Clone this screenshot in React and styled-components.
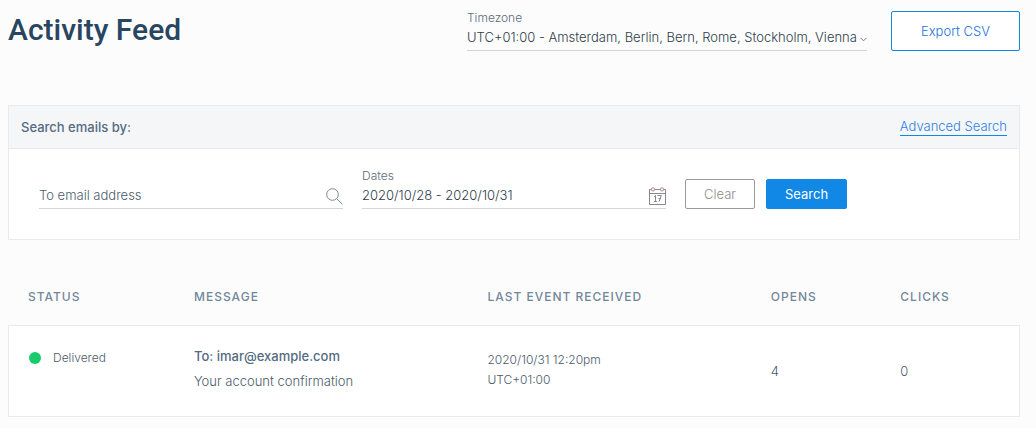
import React, { useState } from "react";
//styles
import styled, { createGlobalStyle } from "styled-components";

const events = [
    {
        id: 1,
        status: "Delivered",
        to: "imar@example.com",
        subject: "Your account confirmation",
        date: "2020/10/31 12:20pm",
        zone: "UTC+01:00",
        opens: 4,
        clicks: 0,
    },
];

const ChevronIcon = () => (
    <svg width='7' height='5' viewBox='0 0 7 5' aria-hidden='true'>
        <path
            d='M0.5 0.8 L3.5 3.8 L6.5 0.8'
            fill='none'
            stroke='#6b7a89'
            strokeWidth='1'
        />
    </svg>
);

const SearchIcon = () => (
    <svg width='17' height='17' viewBox='0 0 17 17' aria-hidden='true'>
        <g fill='none' stroke='#7f868e' strokeWidth='1'>
            <circle cx='6.5' cy='6.5' r='5.8' />
            <path d='M10.7 10.7 L16.4 16.2' />
        </g>
    </svg>
);

const CalendarIcon = () => (
    <svg width='17' height='18' viewBox='0 0 17 18' aria-hidden='true'>
        <g fill='none' stroke='#8a8790' strokeWidth='1'>
            <path d='M2.5 2.5 H0.5 V17.5 H16.5 V2.5 H14.5' />
            <path d='M5.5 2.5 H11.5' />
            <path d='M0.5 6.5 H16.5' />
            <circle cx='4' cy='2.4' r='1.6' stroke='#a98a7c' />
            <circle cx='13' cy='2.4' r='1.6' stroke='#a98a7c' />
            <path d='M5 9.8 L6.5 8.5 V14.5 M5 14.5 H8' />
            <path d='M8.5 8.5 H12.3 L10 14.8 M9.5 11.5 H12' />
        </g>
    </svg>
);

function App() {
    const [email, setEmail] = useState("");
    const [dates, setDates] = useState("2020/10/28 - 2020/10/31");

    return (
        <>
            <GlobalStyle />
            <Page>
                <Header>
                    <Title>Activity Feed</Title>
                    <Timezone>
                        <Label htmlFor='timezone'>Timezone</Label>
                        <Control>
                            <Select id='timezone'>
                                <option>
                                    UTC+01:00 - Amsterdam, Berlin, Bern, Rome,
                                    Stockholm, Vienna
                                </option>
                            </Select>
                            <ControlIcon className='chevron'>
                                <ChevronIcon />
                            </ControlIcon>
                        </Control>
                    </Timezone>
                    <Button className='export'>Export CSV</Button>
                </Header>

                <Panel>
                    <PanelHeader>
                        <PanelTitle>Search emails by:</PanelTitle>
                        <AdvancedLink href='#advanced'>
                            Advanced Search
                        </AdvancedLink>
                    </PanelHeader>
                    <SearchForm onSubmit={(e) => e.preventDefault()}>
                        <Field>
                            <Control>
                                <Input
                                    aria-label='To email address'
                                    placeholder='To email address'
                                    value={email}
                                    onChange={(e) => setEmail(e.target.value)}
                                />
                                <ControlIcon>
                                    <SearchIcon />
                                </ControlIcon>
                            </Control>
                        </Field>
                        <Field>
                            <Label htmlFor='dates'>Dates</Label>
                            <Control>
                                <Input
                                    id='dates'
                                    value={dates}
                                    onChange={(e) => setDates(e.target.value)}
                                />
                                <ControlIcon>
                                    <CalendarIcon />
                                </ControlIcon>
                            </Control>
                        </Field>
                        <Actions>
                            <Button
                                type='button'
                                className='clear'
                                onClick={() => setEmail("")}
                            >
                                Clear
                            </Button>
                            <Button type='submit' className='search'>
                                Search
                            </Button>
                        </Actions>
                    </SearchForm>
                </Panel>

                <Table>
                    <thead>
                        <tr>
                            <HeadCell $width='16.4%'>Status</HeadCell>
                            <HeadCell $width='29%'>Message</HeadCell>
                            <HeadCell $width='28%'>
                                Last event received
                            </HeadCell>
                            <HeadCell $width='12.8%'>Opens</HeadCell>
                            <HeadCell>Clicks</HeadCell>
                        </tr>
                    </thead>
                    <tbody>
                        {events.map((event) => (
                            <tr key={event.id}>
                                <Cell>
                                    <Status>
                                        <Dot />
                                        {event.status}
                                    </Status>
                                </Cell>
                                <Cell>
                                    <Message>
                                        <Recipient>To: {event.to}</Recipient>
                                        {event.subject}
                                    </Message>
                                </Cell>
                                <Cell>
                                    <Stamp>
                                        <div>{event.date}</div>
                                        <div>{event.zone}</div>
                                    </Stamp>
                                </Cell>
                                <Cell>{event.opens}</Cell>
                                <Cell>{event.clicks}</Cell>
                            </tr>
                        ))}
                    </tbody>
                </Table>
            </Page>
        </>
    );
}

const GlobalStyle = createGlobalStyle`
    * {
        box-sizing: border-box;
    }

    body {
        margin: 0;
        background: #fcfcfc;
        color: #4c5b6b;
        font-family: Inter, Roboto, sans-serif;
        font-size: 13px;
        font-weight: 300;
    }

    button, input, select {
        font: inherit;
        color: inherit;
    }
`;

const Page = styled.main`
    padding: 11px 16px 11px 8px;
`;

const Header = styled.header`
    display: flex;
    align-items: flex-start;
    gap: 24px;
    margin-bottom: 54px;
`;

const Title = styled.h1`
    flex: 1;
    margin: 0;
    font-family: Roboto, sans-serif;
    font-size: 30px;
    line-height: 38px;
    font-weight: 500;
    color: #294661;
    white-space: nowrap;
`;

const Timezone = styled.div`
    width: 400px;
`;

const Label = styled.label`
    display: block;
    font-size: 12px;
    line-height: 14px;
    color: #5c6b7a;
`;

const Control = styled.div`
    position: relative;
`;

const Select = styled.select`
    display: block;
    width: 100%;
    height: 26px;
    padding: 0 0 1px;
    border: none;
    border-bottom: 1px solid #cbd5e0;
    border-radius: 0;
    background: transparent;
    appearance: none;
    color: #2f3c4a;
`;

const Input = styled.input`
    display: block;
    width: 100%;
    height: 26px;
    padding: 0 24px 2px 0;
    border: none;
    border-bottom: 1px solid #d3d6df;
    background: transparent;
    color: #2f3c4a;

    &::placeholder {
        color: #4c5b6b;
        opacity: 1;
    }
`;

const ControlIcon = styled.span`
    position: absolute;
    right: 0;
    bottom: 4px;
    display: flex;
    pointer-events: none;

    &.chevron {
        bottom: 9px;
    }
`;

const Button = styled.button`
    height: 30px;
    padding: 0 18px;
    border: 1px solid #1188e6;
    border-radius: 2px;
    background: #fff;
    line-height: 16px;
    white-space: nowrap;
    cursor: pointer;

    &.export {
        height: 40px;
        padding: 0 29px;
        color: #1a72e0;
    }

    &.clear {
        border-color: #999;
        color: #8a8d90;
    }

    &.search {
        background: #1188e6;
        color: #fff;
        font-weight: 400;
    }
`;

const Panel = styled.section`
    border: 1px solid #e9eaeb;
    background: #fff;
`;

const PanelHeader = styled.div`
    display: flex;
    align-items: center;
    justify-content: space-between;
    height: 43px;
    padding: 0 12px;
    border-bottom: 1px solid #e9ebed;
    background: #f4f6f8;
`;

const PanelTitle = styled.h2`
    margin: 0;
    font-size: 13px;
    line-height: 18px;
    font-weight: 500;
    color: #546b81;
`;

const AdvancedLink = styled.a`
    border-bottom: 1px solid #1188e6;
    line-height: 17px;
    color: #2f80e4;
    text-decoration: none;
`;

const SearchForm = styled.form`
    display: flex;
    align-items: flex-end;
    gap: 19px;
    padding: 20px 30px 30px;
`;

const Field = styled.div`
    flex: 0 1 304px;
`;

const Actions = styled.div`
    display: flex;
    gap: 11px;
`;

const Table = styled.table`
    width: 100%;
    margin-top: 42px;
    border-collapse: separate;
    border-spacing: 0;
    table-layout: fixed;
`;

const HeadCell = styled.th`
    width: ${(props) => props.$width || "auto"};
    height: 43px;
    padding: 0 0 14px 20px;
    font-size: 12px;
    font-weight: 500;
    letter-spacing: 1px;
    text-align: left;
    text-transform: uppercase;
    color: #73879b;
`;

const Cell = styled.td`
    height: 92px;
    padding: 0 0 0 20px;
    border: solid #e9eaeb;
    border-width: 1px 0;
    background: #fff;
    vertical-align: middle;

    &:first-child {
        border-left-width: 1px;
    }

    &:last-child {
        border-right-width: 1px;
    }
`;

const Status = styled.div`
    display: flex;
    align-items: center;
    gap: 12px;
    padding-bottom: 26px;
    font-size: 12px;
    line-height: 16px;
`;

const Dot = styled.span`
    width: 12px;
    height: 12px;
    border-radius: 50%;
    background: #18cb6c;
`;

const Message = styled.div`
    padding-bottom: 4px;
    line-height: 25px;
`;

const Recipient = styled.div`
    font-weight: 500;
    color: #546b81;
`;

const Stamp = styled.div`
    padding-bottom: 2px;
    font-size: 12px;
    line-height: 20px;
`;

export default App;
